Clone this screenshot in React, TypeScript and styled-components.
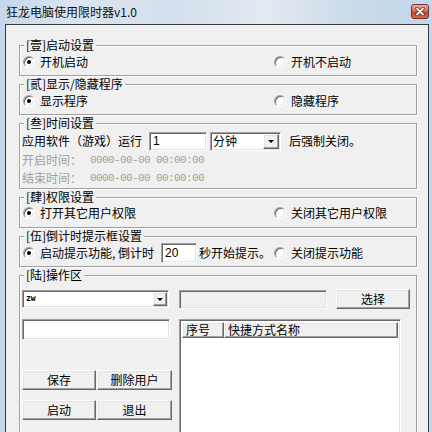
import styled, { createGlobalStyle } from "styled-components";

const GlobalStyle = createGlobalStyle`
  html, body {
    margin: 0;
    padding: 0;
    width: 432px;
    height: 432px;
    overflow: hidden;
  }
  body {
    font-family: "Noto Sans CJK SC", "Noto Sans", sans-serif;
    font-size: 12px;
    line-height: 14px;
    color: #000;
  }
`;

// Window chrome
const Frame = styled.div`
  width: 432px;
  height: 432px;
  display: flex;
  flex-direction: column;
  overflow: hidden;
  background: linear-gradient(
    90deg,
    #c4d8ee 0%,
    #dbe5f0 18%,
    #d3dfec 40%,
    #e2e9f1 62%,
    #cddbea 80%,
    #c2d6ec 100%
  );
`;

const TitleBar = styled.div`
  flex: none;
  height: 24px;
  display: flex;
  align-items: center;
  justify-content: space-between;
  padding: 0 3px 0 6px;
`;

const Title = styled.span`
  font-size: 12px;
  line-height: 14px;
  color: #111;
`;

const CloseButton = styled.div`
  width: 18px;
  height: 15px;
  margin-top: -1px;
  box-sizing: border-box;
  border: 1px solid #7a2e24;
  border-radius: 3px;
  background: linear-gradient(#eab0a2 0%, #d9745f 45%, #c2452f 55%, #d36a52 100%);
  display: flex;
  align-items: center;
  justify-content: center;
`;

const Client = styled.div`
  flex: 1;
  margin: 0 3px 0 5px;
  border: 1px solid #3a3a3a;
  border-bottom: none;
  background: #f0f0f0;
  padding: 20px 11px 0 13px;
  display: flex;
  flex-direction: column;
  gap: 8px;
  overflow: hidden;
`;

// Group boxes
const Group = styled.div<{ $h: number; $pad: string }>`
  position: relative;
  flex: none;
  box-sizing: border-box;
  height: ${(p) => p.$h}px;
  border: 1px solid #a0a0a0;
  box-shadow: inset 1px 1px 0 #fff, 1px 1px 0 #fff;
  padding: ${(p) => p.$pad};
`;

const Legend = styled.span`
  position: absolute;
  top: -8px;
  left: 4px;
  padding: 0 2px;
  background: #f0f0f0;
  line-height: 14px;
  white-space: nowrap;
`;

const OptionRow = styled.div<{ $h?: number }>`
  display: grid;
  grid-template-columns: 251px 1fr;
  align-items: center;
  height: ${(p) => p.$h ?? 14}px;
  white-space: nowrap;
`;

const Option = styled.label`
  display: inline-flex;
  align-items: center;
  gap: 5px;
`;

const Radio = styled.span<{ $on?: boolean }>`
  flex: none;
  width: 12px;
  height: 12px;
  box-sizing: border-box;
  border-radius: 50%;
  background: #fff;
  border: 1px solid;
  border-color: #a0a0a0 #fff #fff #a0a0a0;
  box-shadow: inset 1px 1px 0 #696969, inset -1px -1px 0 #e3e3e3;
  &::after {
    content: "";
    display: ${(p) => (p.$on ? "block" : "none")};
    width: 4px;
    height: 4px;
    margin: 3px;
    border-radius: 50%;
    background: #000;
  }
`;

const FieldRow = styled.div<{ $h: number }>`
  display: flex;
  align-items: center;
  height: ${(p) => p.$h}px;
  white-space: nowrap;
`;

const Gap = styled.span<{ $w: number }>`
  flex: none;
  width: ${(p) => p.$w}px;
`;

const Spacer = styled.div<{ $h: number }>`
  flex: none;
  height: ${(p) => p.$h}px;
`;

const Dim = styled.span`
  color: #a0a0a0;
`;

const Digits = styled.span`
  color: #a0a0a0;
  font-family: "Liberation Mono", "DejaVu Sans Mono", monospace;
  font-size: 11px;
  letter-spacing: -0.6px;
`;

// Controls
const sunken = `
  box-sizing: border-box;
  border: 1px solid;
  border-color: #a0a0a0 #fff #fff #a0a0a0;
  box-shadow: inset 1px 1px 0 #696969, inset -1px -1px 0 #e3e3e3;
`;

const raised = `
  box-sizing: border-box;
  background: #f0f0f0;
  border: 1px solid;
  border-color: #fff #696969 #696969 #fff;
  box-shadow: inset -1px -1px 0 #a0a0a0, inset 1px 1px 0 #e3e3e3;
`;

const TextBox = styled.div<{ $w: number; $h: number; $off?: boolean }>`
  ${sunken}
  flex: none;
  width: ${(p) => p.$w}px;
  height: ${(p) => p.$h}px;
  background: ${(p) => (p.$off ? "#f0f0f0" : "#fff")};
  padding: 0 3px;
  display: flex;
  align-items: center;
  font-family: "Liberation Sans", Arial, sans-serif;
  font-size: 12px;
`;

const Combo = styled.div<{ $w: number; $h: number }>`
  ${sunken}
  flex: none;
  width: ${(p) => p.$w}px;
  height: ${(p) => p.$h}px;
  background: #fff;
  padding: 1px 1px 1px 2px;
  display: flex;
  align-items: center;
  justify-content: space-between;
`;

const ComboText = styled.span<{ $tiny?: boolean }>`
  ${(p) =>
    p.$tiny
      ? `font-family: "DejaVu Sans Mono", monospace; font-size: 8px; font-weight: bold; padding-left: 1px;`
      : ""}
`;

const DropButton = styled.span<{ $w: number }>`
  ${raised}
  flex: none;
  width: ${(p) => p.$w}px;
  height: 100%;
  display: flex;
  align-items: center;
  justify-content: center;
  &::after {
    content: "";
    border-left: 3px solid transparent;
    border-right: 3px solid transparent;
    border-top: 3px solid #000;
    margin-top: 1px;
  }
`;

const Button = styled.div<{ $w: number }>`
  ${raised}
  flex: none;
  width: ${(p) => p.$w}px;
  height: 20px;
  display: flex;
  align-items: center;
  justify-content: center;
`;

// Operation area
const Workspace = styled.div`
  display: grid;
  grid-template-columns: 150px 222px;
  column-gap: 7px;
  align-items: start;
`;

const Column = styled.div`
  display: flex;
  flex-direction: column;
`;

const ButtonRow = styled.div`
  display: flex;
  gap: 1px;
`;

const ListView = styled.div`
  ${sunken}
  height: 130px;
  background: #fff;
  padding: 2px;
  display: flex;
  flex-direction: column;
`;

const ListHeader = styled.div`
  display: flex;
  height: 16px;
  flex: none;
`;

const HeaderCell = styled.div<{ $w?: number }>`
  ${raised}
  ${(p) => (p.$w ? `width: ${p.$w}px; flex: none;` : "flex: 1;")}
  height: 16px;
  padding-left: 3px;
  display: flex;
  align-items: center;
  line-height: 12px;
`;

const CloseGlyph = () => (
  <svg width="10" height="9" viewBox="0 0 10 9">
    <path d="M2 1.5 L8 7.5 M8 1.5 L2 7.5" stroke="#5a1a12" strokeWidth="3.2" strokeLinecap="round" />
    <path d="M2 1.5 L8 7.5 M8 1.5 L2 7.5" stroke="#fff" strokeWidth="1.8" strokeLinecap="round" />
  </svg>
);

const App = () => {
  return (
    <>
      <GlobalStyle />
      <Frame>
        <TitleBar>
          <Title>狂龙电脑使用限时器v1.0</Title>
          <CloseButton>
            <CloseGlyph />
          </CloseButton>
        </TitleBar>
        <Client>
          <Group $h={31} $pad="9px 0 0 3px">
            <Legend>[壹]启动设置</Legend>
            <OptionRow>
              <Option>
                <Radio $on />
                开机启动
              </Option>
              <Option>
                <Radio />
                开机不启动
              </Option>
            </OptionRow>
          </Group>

          <Group $h={31} $pad="9px 0 0 3px">
            <Legend>[贰]显示/隐藏程序</Legend>
            <OptionRow>
              <Option>
                <Radio $on />
                显示程序
              </Option>
              <Option>
                <Radio />
                隐藏程序
              </Option>
            </OptionRow>
          </Group>

          <Group $h={66} $pad="7px 0 0 2px">
            <Legend>[叁]时间设置</Legend>
            <FieldRow $h={20}>
              应用软件（游戏）运行
              <Gap $w={7} />
              <TextBox $w={58} $h={19}>1</TextBox>
              <Gap $w={3} />
              <Combo $w={71} $h={19}>
                <ComboText>分钟</ComboText>
                <DropButton $w={16} />
              </Combo>
              <Gap $w={8} />
              后强制关闭。
            </FieldRow>
            <FieldRow $h={18}>
              <Dim>开启时间：</Dim>
              <Gap $w={8} />
              <Digits>0000-00-00 00:00:00</Digits>
            </FieldRow>
            <FieldRow $h={18}>
              <Dim>结束时间：</Dim>
              <Gap $w={8} />
              <Digits>0000-00-00 00:00:00</Digits>
            </FieldRow>
          </Group>

          <Group $h={31} $pad="8px 0 0 3px">
            <Legend>[肆]权限设置</Legend>
            <OptionRow>
              <Option>
                <Radio $on />
                打开其它用户权限
              </Option>
              <Option>
                <Radio />
                关闭其它用户权限
              </Option>
            </OptionRow>
          </Group>

          <Group $h={31} $pad="6px 0 0 3px">
            <Legend>[伍]倒计时提示框设置</Legend>
            <OptionRow $h={20}>
              <FieldRow $h={20}>
                <Option>
                  <Radio $on />
                  启动提示功能, 倒计时
                </Option>
                <Gap $w={7} />
                <TextBox $w={36} $h={20}>20</TextBox>
                <Gap $w={2} />
                秒开始提示。
              </FieldRow>
              <Option>
                <Radio />
                关闭提示功能
              </Option>
            </OptionRow>
          </Group>

          <Group $h={200} $pad="13px 0 0 2px">
            <Legend>[陆]操作区</Legend>
            <Workspace>
              <Column>
                <Spacer $h={1} />
                <Combo $w={147} $h={18}>
                  <ComboText $tiny>zw</ComboText>
                  <DropButton $w={14} />
                </Combo>
                <Spacer $h={11} />
                <TextBox $w={148} $h={21} />
                <Spacer $h={30} />
                <ButtonRow>
                  <Button $w={74}>保存</Button>
                  <Button $w={75}>删除用户</Button>
                </ButtonRow>
                <Spacer $h={10} />
                <ButtonRow>
                  <Button $w={74}>启动</Button>
                  <Button $w={75}>退出</Button>
                </ButtonRow>
              </Column>
              <Column>
                <FieldRow $h={20}>
                  <TextBox $w={148} $h={19} $off />
                  <Gap $w={9} />
                  <Button $w={74}>选择</Button>
                </FieldRow>
                <Spacer $h={10} />
                <ListView>
                  <ListHeader>
                    <HeaderCell $w={42}>序号</HeaderCell>
                    <HeaderCell>快捷方式名称</HeaderCell>
                  </ListHeader>
                </ListView>
              </Column>
            </Workspace>
          </Group>
        </Client>
      </Frame>
    </>
  );
};

export default App;
